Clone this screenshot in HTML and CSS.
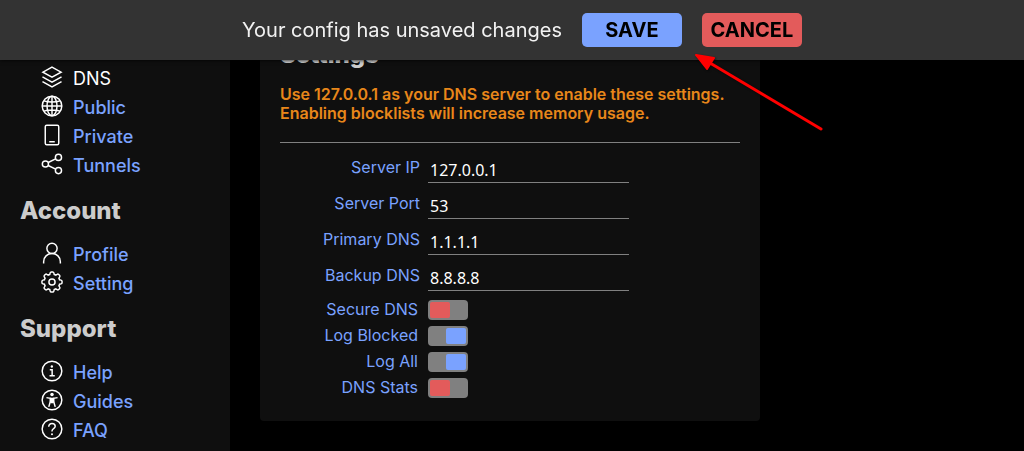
FILE: index.html
```html
<!DOCTYPE html>
<html lang="en">
<head>
<meta charset="utf-8">
<title>DNS Settings</title>
<link rel="stylesheet" href="styles.css">
</head>
<body>
<div class="banner" role="status">
  <span class="banner-text">Your config has unsaved changes</span>
  <button class="btn btn-save" type="button">SAVE</button>
  <button class="btn btn-cancel" type="button">CANCEL</button>
</div>

<div class="layout">
  <nav class="sidebar">
    <a class="item active" href="#dns"><svg class="icon" viewBox="0 0 15 15"><path d="M7.5 .8L13.7 4.2L7.5 7.6L1.3 4.2ZM1 7.4L7.5 11L14 7.4M1 10.6L7.5 14.2L14 10.6"/></svg>DNS</a>
    <a class="item" href="#public"><svg class="icon" viewBox="0 0 15 15"><circle cx="7.5" cy="7.5" r="6.7"/><ellipse cx="7.5" cy="7.5" rx="3.4" ry="6.7"/><path d="M7.5 .8V14.2M.8 7.5H14.2M2 4C5 5.1 10 5.1 13 4M2 11C5 9.9 10 9.9 13 11"/></svg>Public</a>
    <a class="item" href="#private"><svg class="icon" viewBox="0 0 15 15"><rect x="2.9" y=".8" width="9.2" height="13.4" rx="1"/><path d="M5.6 12.1H9.4"/></svg>Private</a>
    <a class="item" href="#tunnels"><svg class="icon" viewBox="0 0 15 15"><circle cx="3" cy="7.5" r="2.1"/><circle cx="11.9" cy="3" r="2.1"/><circle cx="11.9" cy="12" r="2.1"/><path d="M4.9 6.5L10 4M4.9 8.5L10 11"/></svg>Tunnels</a>

    <h2 class="heading group">Account</h2>
    <a class="item" href="#profile"><svg class="icon" viewBox="0 0 15 15"><circle cx="7.5" cy="4.3" r="3.5"/><path d="M1.8 14.7V13.4C1.8 10.2 4.3 7.9 7.5 7.9S13.2 10.2 13.2 13.4V14.7"/></svg>Profile</a>
    <a class="item" href="#setting"><svg class="icon" viewBox="0 0 15 15"><path d="M7.07.65C6.67.65 6.33.93 6.24 1.31L6 2.36C5.62 2.47 5.26 2.62 4.92 2.81L4.01 2.24C3.68 2.02 3.24 2.07 2.96 2.35L2.35 2.96C2.07 3.24 2.02 3.68 2.23 4.01L2.81 4.93C2.62 5.26 2.47 5.63 2.36 6L1.31 6.24C.92 6.33.65 6.67.65 7.07V7.93C.65 8.33.92 8.67 1.31 8.76L2.36 9C2.47 9.38 2.62 9.74 2.81 10.08L2.24 10.99C2.02 11.32 2.07 11.76 2.35 12.04L2.96 12.65C3.24 12.93 3.68 12.98 4.01 12.77L4.93 12.19C5.26 12.38 5.63 12.53 6 12.64L6.24 13.69C6.33 14.08 6.67 14.35 7.07 14.35H7.93C8.33 14.35 8.67 14.08 8.76 13.69L9 12.64C9.37 12.53 9.74 12.38 10.07 12.19L10.99 12.77C11.32 12.98 11.76 12.93 12.04 12.65L12.65 12.04C12.93 11.76 12.98 11.32 12.76 10.99L12.19 10.08C12.38 9.74 12.53 9.38 12.64 9L13.69 8.76C14.08 8.67 14.35 8.33 14.35 7.93V7.07C14.35 6.67 14.08 6.33 13.69 6.24L12.64 6C12.53 5.63 12.38 5.26 12.19 4.93L12.76 4.01C12.98 3.68 12.93 3.24 12.65 2.96L12.04 2.35C11.76 2.07 11.32 2.02 10.99 2.24L10.08 2.81C9.74 2.62 9.37 2.47 9 2.36L8.76 1.31C8.67.93 8.33.65 7.93.65Z"/><circle cx="7.5" cy="7.5" r="2.1"/></svg>Setting</a>

    <h2 class="heading group">Support</h2>
    <a class="item" href="#help"><svg class="icon" viewBox="0 0 15 15"><circle cx="7.5" cy="7.5" r="6.7"/><path d="M6 6.6H7.6V10.8M5.8 10.8H9.4"/><circle class="solid" cx="7.4" cy="4.4" r=".8"/></svg>Help</a>
    <a class="item" href="#guides"><svg class="icon" viewBox="0 0 15 15"><circle cx="7.5" cy="7.5" r="6.7"/><circle class="solid" cx="7.5" cy="3.8" r="1.2"/><path d="M3.7 5.9L6.4 6.4V8.4L5.3 12.2M11.3 5.9L8.6 6.4V8.4L9.7 12.2"/><path class="solid" d="M6 5.9H9V9L8.2 9.7H6.8L6 9Z"/></svg>Guides</a>
    <a class="item" href="#faq"><svg class="icon" viewBox="0 0 15 15"><circle cx="7.5" cy="7.5" r="6.7"/><path d="M5.3 6V5.7C5.3 4.6 6.2 3.8 7.5 3.8S9.7 4.6 9.7 5.7C9.7 7.3 7.5 7.2 7.5 8.8V9.2"/><circle class="solid" cx="7.5" cy="11.1" r=".7"/></svg>FAQ</a>
  </nav>

  <main class="content">
    <form class="panel">
      <h2 class="heading">Settings</h2>
      <p class="notice">Use 127.0.0.1 as your DNS server to enable these settings.<br>Enabling blocklists will increase memory usage.</p>
      <hr class="rule">
      <div class="field"><label for="ip">Server IP</label><input id="ip" type="text" value="127.0.0.1"></div>
      <div class="field"><label for="port">Server Port</label><input id="port" type="text" value="53"></div>
      <div class="field"><label for="dns1">Primary DNS</label><input id="dns1" type="text" value="1.1.1.1"></div>
      <div class="field"><label for="dns2">Backup DNS</label><input id="dns2" type="text" value="8.8.8.8"></div>
      <div class="toggles">
        <div class="toggle"><label for="secure">Secure DNS</label><input id="secure" type="checkbox"></div>
        <div class="toggle"><label for="blocked">Log Blocked</label><input id="blocked" type="checkbox" checked></div>
        <div class="toggle"><label for="all">Log All</label><input id="all" type="checkbox" checked></div>
        <div class="toggle"><label for="stats">DNS Stats</label><input id="stats" type="checkbox"></div>
      </div>
    </form>
  </main>
</div>

<svg class="arrow" viewBox="0 0 140 90" aria-hidden="true">
  <path class="arrow-line" d="M20 17L131 83"/>
  <path class="arrow-head" d="M6 9L24 12L17 23Z"/>
</svg>
</body>
</html>
```
FILE: styles.css
```css
* { box-sizing: border-box; }

body {
  margin: 0;
  background: #000;
  color: #fff;
  font-family: Inter, sans-serif;
  font-size: 16px;
}

.banner {
  position: fixed;
  top: 0;
  left: 0;
  right: 0;
  z-index: 2;
  display: flex;
  align-items: center;
  justify-content: center;
  height: 60px;
  background: #333;
  box-shadow: 0 0 4px #000;
}

.banner > * { margin-left: 20px; }

.banner-text {
  color: #f2f2f2;
  font-size: 20px;
}

.btn {
  width: 100px;
  height: 34px;
  padding: 0;
  border: 0;
  border-radius: 5px;
  color: #000;
  font: bold 20px Inter, sans-serif;
}

.btn-save { background: #7aa2ff; }
.btn-cancel { background: #e35b5b; }

.layout { display: flex; }

.sidebar {
  width: 230px;
  padding: 64px 20px 5px;
  background: #0f0f0f;
}

.heading {
  margin: 0;
  color: #ccc;
  font-size: 24px;
  font-weight: 800;
  line-height: 29px;
}

.group { margin: 16px 0 15px; }

.item {
  display: flex;
  gap: 10px;
  padding-left: 21px;
  color: #7aa2ff;
  font-size: 18px;
  font-weight: 500;
  line-height: 29px;
  text-decoration: none;
}

.active {
  color: #fff;
  font-weight: 400;
}

.icon {
  width: 22px;
  height: 22px;
  margin-top: 2px;
  fill: none;
  stroke: #fff;
  stroke-width: 1;
}

.icon .solid {
  fill: #fff;
  stroke: none;
}

.content {
  flex: 1;
  padding: 20px 30px 30px;
}

.panel {
  max-width: 500px;
  padding: 20px 20px 23px;
  border-radius: 4px;
  background: #0f0f0f;
}

.notice {
  margin: 16px 0 19px;
  color: #e8871a;
  font-weight: 600;
  line-height: 19px;
}

.rule {
  height: 1px;
  margin: 0 0 13px;
  border: 0;
  background: #808080;
}

.field {
  display: flex;
  gap: 8px;
  height: 36px;
}

.field label,
.toggle label {
  color: #7aa2ff;
  line-height: 22px;
  text-align: right;
}

.field label { width: 140px; }

.field input {
  width: 201px;
  height: 27px;
  padding: 2px 2px 0;
  border: 0;
  border-bottom: 1px solid #808080;
  outline: 0;
  background: transparent;
  color: #fff;
  font: 16px "Noto Sans", sans-serif;
}

.toggles {
  display: grid;
  gap: 6px;
}

.toggle {
  display: flex;
  gap: 10px;
  height: 20px;
}

.toggle label {
  width: 138px;
  line-height: 19px;
}

.toggle input {
  display: flex;
  width: 40px;
  height: 20px;
  margin: 0;
  padding: 2px;
  border-radius: 4px;
  appearance: none;
  background: #808080;
}

.toggle input::before {
  content: "";
  width: 20px;
  border-radius: 2px;
  background: #e35b5b;
}

.toggle input:checked { justify-content: flex-end; }
.toggle input:checked::before { background: #7aa2ff; }

.arrow {
  position: fixed;
  top: 46px;
  left: 690px;
  z-index: 3;
  width: 140px;
  height: 90px;
  pointer-events: none;
  filter: drop-shadow(1px 1px 1px #0008);
}

.arrow-line {
  stroke: #f00;
  stroke-width: 3;
  stroke-linecap: round;
}

.arrow-head {
  fill: #f00;
  stroke: #f00;
  stroke-width: 2;
  stroke-linejoin: round;
}
```
